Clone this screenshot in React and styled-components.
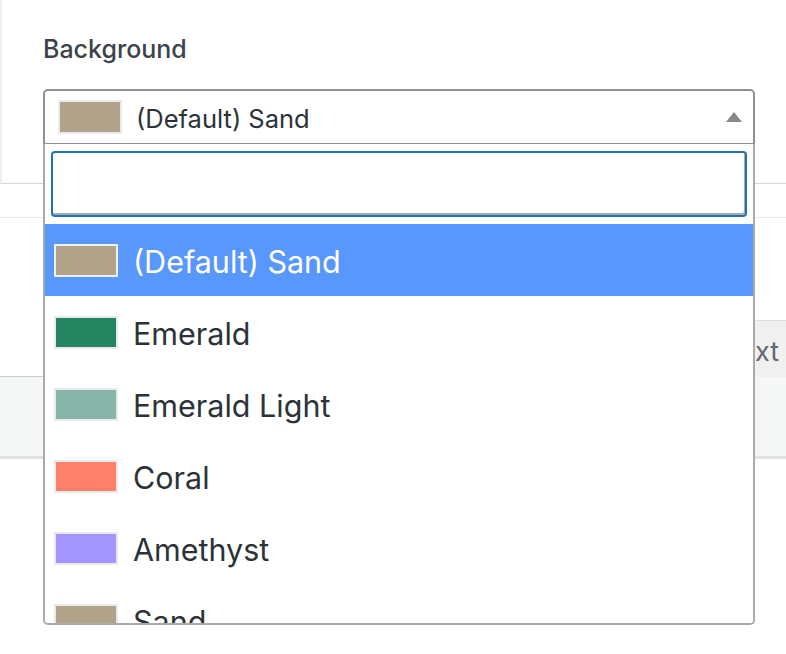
import React from "react";
import styled, { createGlobalStyle } from "styled-components";

const GlobalStyle = createGlobalStyle`
  html, body { margin: 0; padding: 0; background: #fff; }
  body {
    font-family: Inter, "Liberation Sans", Arial, sans-serif;
    width: 786px;
    height: 654px;
    overflow: hidden;
  }
  * { box-sizing: border-box; }
`;

const Page = styled.div`
  width: 786px;
  height: 654px;
  display: flex;
  flex-direction: column;
  background: #fff;
`;

const Panel = styled.section`
  height: 184px;
  border-left: 2px solid #f0f0f1;
  border-bottom: 1px solid #d5d6d8;
  padding: 34px 0 0 41px;
  display: flex;
  flex-direction: column;
  position: relative;
  z-index: 2;
`;

const Label = styled.div`
  font-size: 25px;
  line-height: 30px;
  font-weight: 500;
  color: #3c434a;
`;

const SelectWrap = styled.div`
  position: relative;
  width: 712px;
  margin-top: 25px;
`;

const SelectHead = styled.div`
  height: 55px;
  border: 2px solid #8c8f94;
  border-bottom-width: 1px;
  border-radius: 5px 5px 0 0;
  background: #fff;
  display: flex;
  align-items: center;
  padding: 0 11px 0 13px;
`;

const Swatch = styled.span`
  flex: none;
  width: 64px;
  height: ${(p) => (p.$small ? 33 : 34)}px;
  border: 2px solid ${(p) => (p.$onBlue ? "#eef0f4" : "#e8e8ee")};
  background: ${(p) => p.$color};
`;

const HeadText = styled.span`
  margin-left: 14px;
  padding-top: 3px;
  font-size: 25.5px;
  color: #2c3338;
  white-space: nowrap;
`;

const Arrow = styled.span`
  margin-left: auto;
  width: 0;
  height: 0;
  border-left: 8px solid transparent;
  border-right: 8px solid transparent;
  border-bottom: 10px solid #888;
`;

const Dropdown = styled.div`
  position: absolute;
  top: 100%;
  left: 0;
  width: 712px;
  height: 481px;
  background: #fff;
  border: 2px solid #aaa;
  border-top: none;
  border-radius: 0 0 5px 5px;
  padding: 7px 0 0 0;
  overflow: hidden;
  display: flex;
  flex-direction: column;
`;

const SearchBox = styled.div`
  padding: 0 6px;
`;

const SearchInput = styled.input`
  display: block;
  width: 100%;
  height: 66px;
  border: 2px solid #2271b1;
  border-radius: 4px;
  box-shadow: inset -1px -2px 0 #a7aaad;
  outline: none;
  font-size: 25px;
  font-family: inherit;
  padding: 0 10px;
  background: #fff;
`;

const Results = styled.ul`
  list-style: none;
  margin: 7px 0 0;
  padding: 0;
`;

const Option = styled.li`
  height: 72px;
  display: flex;
  align-items: center;
  padding-left: 9px;
  background: ${(p) => (p.$active ? "#5897fb" : "#fff")};
  color: ${(p) => (p.$active ? "#fff" : "#2c3338")};
`;

const OptionText = styled.span`
  margin-left: 15px;
  padding-top: 2px;
  font-size: 30.5px;
  white-space: nowrap;
`;

const Strip = styled.div`
  height: 34px;
  border-bottom: 1px solid #e8e8ec;
`;

const Spacer = styled.div`
  height: 102px;
`;

const ButtonRow = styled.div`
  height: 57px;
  display: flex;
  justify-content: flex-end;
  margin-bottom: -1px;
  position: relative;
  z-index: 1;
`;

const NextButton = styled.button`
  height: 57px;
  width: 110px;
  border: none;
  border-top: 1px solid #dcdcde;
  background: #f0f0f1;
  color: #646970;
  font-family: inherit;
  font-size: 27px;
  text-align: right;
  padding: 4px 7px 0 0;
`;

const Footer = styled.footer`
  height: 83px;
  background: #f5f6f6;
  border-top: 1px solid #c9ccd0;
  border-bottom: 3px solid #e0e0e2;
`;

const options = [
  { name: "(Default) Sand", color: "#b1a28a", active: true },
  { name: "Emerald", color: "#258563" },
  { name: "Emerald Light", color: "#87b5a7" },
  { name: "Coral", color: "#ff806a" },
  { name: "Amethyst", color: "#a596ff" },
  { name: "Sand", color: "#b1a28a" },
];

export default function App() {
  return (
    <Page>
      <GlobalStyle />
      <Panel>
        <Label>Background</Label>
        <SelectWrap>
          <SelectHead>
            <Swatch $color="#b1a28a" />
            <HeadText>(Default) Sand</HeadText>
            <Arrow />
          </SelectHead>
          <Dropdown>
            <SearchBox>
              <SearchInput type="text" aria-label="Search" />
            </SearchBox>
            <Results>
              {options.map((o) => (
                <Option key={o.name} $active={o.active}>
                  <Swatch $small $color={o.color} $onBlue={o.active} />
                  <OptionText>{o.name}</OptionText>
                </Option>
              ))}
            </Results>
          </Dropdown>
        </SelectWrap>
      </Panel>
      <Strip />
      <Spacer />
      <ButtonRow>
        <NextButton>Next</NextButton>
      </ButtonRow>
      <Footer />
    </Page>
  );
}
